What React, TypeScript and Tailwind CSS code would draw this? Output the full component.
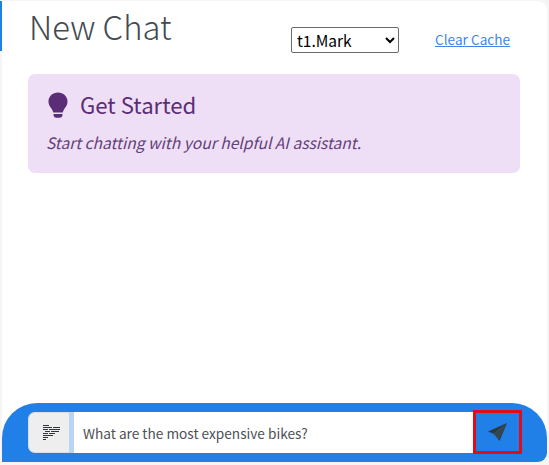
function Header() {
  return (
    <header className="flex h-[73px] items-start pl-[27px]">
      <h1 className="mt-px w-[262px] whitespace-nowrap text-[32.8px] leading-[48px] font-light text-[#434a50]">New Chat</h1>
      <select className="mt-[26px] h-[26px] w-[108px] rounded-[2px] border border-[#6b6b6b] bg-white pl-px pb-[2px] text-[15.5px] leading-[20px] text-black">
        <option>t1.Mark</option>
      </select>
      <a href="#" className="mt-[29px] ml-[36px] whitespace-nowrap text-[13.65px] leading-[19px] text-[#4285e8] underline">Clear Cache</a>
    </header>
  );
}

function GetStarted() {
  return (
    <section className="ml-[26px] h-[99px] w-[492px] rounded-[7px] bg-[#eedff6] pl-[18px] text-[#5b2d77]">
      <div className="flex h-[54px] items-start pt-[18px]">
        <svg viewBox="0 0 20 26" className="ml-[2px] h-[26px] w-[20px] shrink-0" fill="currentColor">
          <path d="M10 .5C4.600.5.5 4.500.5 9.400c0 3 1.200 4.600 2.600 6.700 1 1.500 1.800 3 2.200 4.400h9.400c.4-1.400 1.200-2.900 2.200-4.400 1.400-2.100 2.600-3.700 2.600-6.700C19.500 4.500 15.400.500 10 .500ZM5.500 22h9v.700c0 1.800-1.300 3-3 3h-3c-1.700 0-3-1.200-3-3Z" />
        </svg>
        <h2 className="ml-[12px] -mt-[3px] whitespace-nowrap text-[22.2px] leading-[30px]">Get Started</h2>
      </div>
      <p className="mt-[2px] whitespace-nowrap text-[15.6px] leading-[24px] text-[#64417a] italic">Start chatting with your helpful AI assistant.</p>
    </section>
  );
}

function Composer() {
  return (
    <footer className="mt-auto flex h-[59px] items-start rounded-t-[35px] rounded-br-[9px] bg-[#2080e7] pt-[7px] pl-[26px]">
      <button className="mt-[2px] flex h-[41px] w-[41px] items-center justify-center rounded-l-[7px] border border-r-0 border-[#d5dfe9] bg-[#eeeeee] pl-[5px] pb-px" aria-label="Prompts">
        <svg viewBox="0 0 18 17" className="h-[17px] w-[18px] shrink-0" stroke="#30363b" strokeWidth="1.1">
          <path d="M0 1.500h6M0 3.500h9m1 0h7M0 5.500h5m1 0h11M2 7.500h5m1 0h8M0 9.500h5m1 0h6M0 11.500h10M0 13.500h5M0 15.500h3" />
        </svg>
      </button>
      <div className="mt-[2px] flex h-[41px] w-[404px] items-center border-l-[5px] border-[#b8d4f7] bg-white pt-[2px] pl-[9px] text-[13.65px] whitespace-nowrap text-[#4d5054]">
        <span>What are the most expensive bikes?</span>
      </div>
      <button className="flex h-[44px] w-[49px] items-center justify-center border-[3px] border-[#e00d19]" aria-label="Send">
        <svg viewBox="0 0 20 20" className="h-[20px] w-[20px]">
          <path d="M19 1 0 9.500l5.500 2.300Z" fill="#30383e" />
          <path d="M19 1 7 12.500 11.500 19Z" fill="#30383e" />
          <path d="M19 1 5.500 11.800 11 18Z" fill="#354653" />
        </svg>
      </button>
    </footer>
  );
}

export default function App() {
  return (
    <main className="h-[465px] w-[549px] overflow-hidden bg-[#f5f5f6] pt-px font-['Noto_Sans_CJK_SC',sans-serif]">
      <div className="flex h-[461px] w-[549px]">
        <div className="h-[50px] w-[2px] shrink-0 bg-[#2080e7]" />
        <div className="flex w-[545px] shrink-0 flex-col rounded-r-[9px] bg-white">
          <Header />
          <GetStarted />
          <Composer />
        </div>
      </div>
    </main>
  );
}
